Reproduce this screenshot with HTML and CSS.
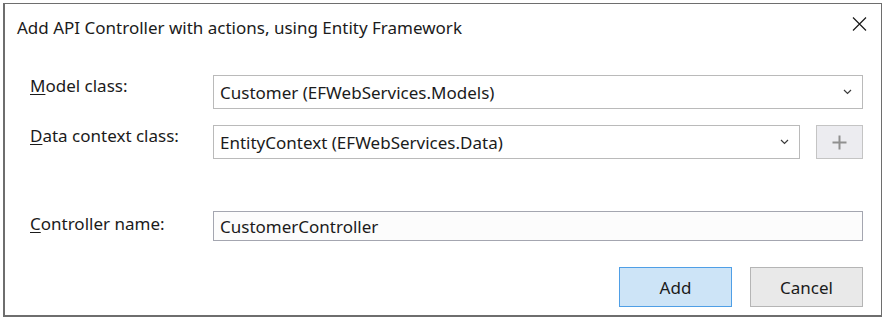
FILE: index.html
```html
<!DOCTYPE html>
<html lang="en">
<head>
    <meta charset="UTF-8">
    <title>Add API Controller with actions, using Entity Framework</title>
    <link rel="stylesheet" href="styles.css">
</head>
<body>
    <div class="dialog">
        <!-- Title bar -->
        <div class="title-bar">
            <div class="title">Add API Controller with actions, using Entity Framework</div>
            <div class="close-btn">
                <svg width="15" height="14" viewBox="0 0 15 14">
                    <path d="M1 0.5 L14 13.5 M14 0.5 L1 13.5" stroke="#1a1a1a" stroke-width="1.2" fill="none"/>
                </svg>
            </div>
        </div>

        <!-- Form -->
        <div class="form">
            <div class="form-row">
                <label class="form-label"><u>M</u>odel class:</label>
                <div class="combo">
                    <span class="combo-text">Customer (EFWebServices.Models)</span>
                    <svg class="chevron" width="9" height="6" viewBox="0 0 9 6">
                        <path d="M1 1 L4.5 4.5 L8 1" stroke="#3a3a3a" stroke-width="1.2" fill="none"/>
                    </svg>
                </div>
            </div>

            <div class="form-row">
                <label class="form-label"><u>D</u>ata context class:</label>
                <div class="combo-group">
                    <div class="combo">
                        <span class="combo-text">EntityContext (EFWebServices.Data)</span>
                        <svg class="chevron" width="9" height="6" viewBox="0 0 9 6">
                            <path d="M1 1 L4.5 4.5 L8 1" stroke="#3a3a3a" stroke-width="1.2" fill="none"/>
                        </svg>
                    </div>
                    <div class="plus-btn">
                        <svg width="15" height="15" viewBox="0 0 15 15">
                            <path d="M7.5 0.5 V14.5 M0.5 7.5 H14.5" stroke="#909090" stroke-width="2" fill="none"/>
                        </svg>
                    </div>
                </div>
            </div>

            <div class="form-row row-name">
                <label class="form-label"><u>C</u>ontroller name:</label>
                <div class="text-input">CustomerController</div>
            </div>
        </div>

        <!-- Buttons -->
        <div class="actions">
            <div class="btn btn-primary">Add</div>
            <div class="btn">Cancel</div>
        </div>
    </div>
</body>
</html>
```

FILE: styles.css
```css
* {
    margin: 0;
    padding: 0;
    box-sizing: border-box;
}

body {
    font-family: "Noto Sans", "Open Sans", sans-serif;
    font-size: 17px;
    color: #1b1b1b;
    background: #fff;
    padding: 3px 0 0 3px;
}

/* Dialog window */
.dialog {
    width: 879px;
    height: 314px;
    border: 1px solid #6e6e6e;
    border-left-width: 2px;
    border-bottom-width: 2px;
    background: #fff;
    display: flex;
    flex-direction: column;
}

.title-bar {
    height: 46px;
    display: flex;
    align-items: center;
    justify-content: space-between;
    padding: 0 14px 0 12px;
}

.title {
    font-size: 17px;
}

.close-btn {
    width: 15px;
    height: 14px;
    display: flex;
    align-self: flex-start;
    margin-top: 13px;
}

/* Form */
.form {
    padding: 25px 18px 0 25px;
    display: flex;
    flex-direction: column;
    gap: 16px;
}

.form-row {
    display: grid;
    grid-template-columns: 183px 1fr;
    align-items: start;
}

.row-name {
    margin-top: 36px;
}

.form-label {
    line-height: 21px;
    font-size: 17px;
}

.row-name .form-label {
    padding-top: 2px;
}

.form-label u {
    text-underline-offset: 2px;
}

.combo {
    height: 34px;
    border: 1px solid #bababa;
    background: #fff;
    display: flex;
    align-items: center;
    justify-content: space-between;
    padding: 0 10px 0 6px;
    font-size: 17px;
}

.combo-group {
    display: flex;
    gap: 16px;
}

.combo-group .combo {
    flex: 1;
}

.chevron {
    flex-shrink: 0;
}

.plus-btn {
    width: 47px;
    height: 34px;
    border: 1px solid #c4c4c4;
    background: #ececf0;
    display: flex;
    align-items: center;
    justify-content: center;
}

.text-input {
    height: 30px;
    border: 1px solid #a4a6b0;
    background: #fcfcfc;
    padding: 0 6px;
    display: flex;
    align-items: center;
    font-size: 17px;
}

/* Buttons */
.actions {
    display: flex;
    justify-content: flex-end;
    gap: 18px;
    padding: 26px 18px 0 0;
}

.btn {
    width: 113px;
    height: 40px;
    border: 1px solid #b5b5b5;
    background: #e9e9e9;
    display: flex;
    align-items: center;
    justify-content: center;
    font-size: 17px;
}

.btn-primary {
    border-color: #4f9fe6;
    background: #cde4f7;
}
```
